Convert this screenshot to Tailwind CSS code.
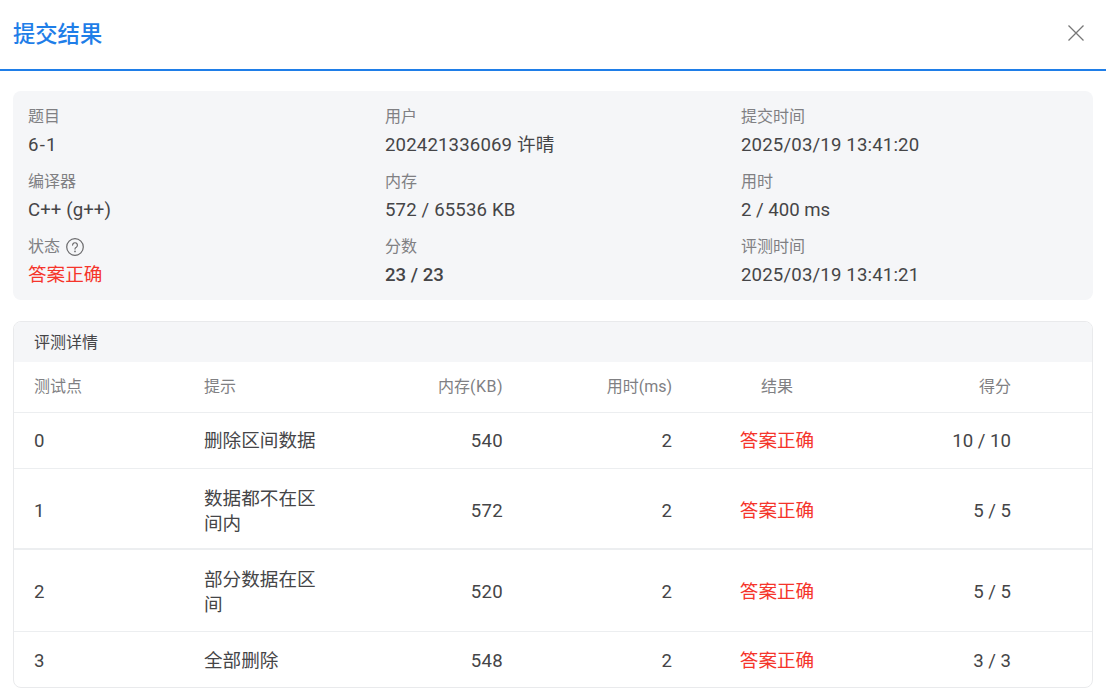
<!DOCTYPE html>
<html lang="zh-CN"><head><meta charset="utf-8">
<script src="https://cdn.jsdelivr.net/npm/@tailwindcss/browser@4"></script>
</head>
<body class="bg-white font-['Roboto','Noto_Sans_CJK_SC',sans-serif] text-[#454547] overflow-hidden">
<div class="w-[1106px] h-[696px] flex flex-col">
  <header class="h-[71px] shrink-0 border-b-2 border-[#1f7ee8] flex items-center justify-between pl-[13px] pr-[21px] pb-[2px]">
    <h1 class="text-[22.3px] leading-[28px] text-[#1f7ee8] font-medium">提交结果</h1>
    <svg class="w-[18px] h-[18px] mb-[2px] text-[#777]" viewBox="0 0 18 18" fill="none" stroke="currentColor" stroke-width="1.3"><path d="M1.5 1.5l15 15M16.5 1.5l-15 15"/></svg>
  </header>
  <main class="px-[13px] pt-5 flex flex-col gap-[21px]">
    <section class="h-[209px] rounded-lg bg-[#f5f6f8] pl-[15px] pt-[14px] grid grid-cols-[357px_356px_1fr] auto-rows-[65px]">
      <div><div class="text-base leading-6 text-[#808083]">题目</div><div class="text-[18.6px] leading-8 tracking-[1.2px]">6-1</div></div>
      <div><div class="text-base leading-6 text-[#808083]">用户</div><div class="text-[18.6px] leading-8 tracking-[0.15px]">202421336069 许晴</div></div>
      <div><div class="text-base leading-6 text-[#808083]">提交时间</div><div class="text-[18.6px] leading-8 tracking-[0.16px]">2025/03/19 13:41:20</div></div>
      <div><div class="text-base leading-6 text-[#808083]">编译器</div><div class="text-[18.6px] leading-8 tracking-[0.1px]">C++ (g++)</div></div>
      <div><div class="text-base leading-6 text-[#808083]">内存</div><div class="text-[18.6px] leading-8 tracking-[0.15px]">572 / 65536 KB</div></div>
      <div><div class="text-base leading-6 text-[#808083]">用时</div><div class="text-[18.6px] leading-8">2 / 400 ms</div></div>
      <div><div class="text-base leading-6 text-[#808083] flex items-center gap-[6px]">状态
        <svg class="w-[18px] h-[18px] text-[#6a6a6c]" viewBox="0 0 18 18" fill="none" stroke="currentColor" stroke-width="1.2"><circle cx="9" cy="9" r="8.3"/><path d="M6.6 7.1a2.4 2.4 0 1 1 3.7 2.1c-.9.5-1.3 1-1.3 1.9" stroke-linecap="round"/><circle cx="9" cy="13.4" r=".85" fill="currentColor" stroke="none"/></svg></div>
        <div class="text-[18.6px] leading-8 text-[#f5352b]">答案正确</div></div>
      <div><div class="text-base leading-6 text-[#808083]">分数</div><div class="text-[18.6px] leading-8 font-medium">23 / 23</div></div>
      <div><div class="text-base leading-6 text-[#808083]">评测时间</div><div class="text-[18.6px] leading-8 tracking-[0.16px]">2025/03/19 13:41:21</div></div>
    </section>
    <section class="h-[367px] rounded-lg border border-[#e9eaec] overflow-hidden flex flex-col">
      <div class="h-[40px] shrink-0 bg-[#f5f6f8] px-5 pt-[2px] flex items-center text-base">评测详情</div>
      <div class="h-[51px] shrink-0 grid grid-cols-[170px_170px_169px_169px_170px_169px_1fr] items-center border-b border-[#eceef0] text-base text-[#808083]">
        <div class="pl-5">测试点</div><div class="pl-5">提示</div><div class="pr-5 text-right">内存<span class="tracking-[0.5px]">(KB)</span></div><div class="pr-5 text-right">用时(ms)</div><div class="text-center">结果</div><div class="pr-5 text-right">得分</div>
      </div>
      <div class="h-[56px] shrink-0 pt-[2px] grid grid-cols-[170px_170px_169px_169px_170px_169px_1fr] items-center border-b border-[#eceef0] text-[18.6px] leading-[25px]">
        <div class="pl-5">0</div><div class="px-5">删除区间数据</div><div class="pr-5 text-right tracking-[0.3px]">540</div><div class="pr-5 text-right">2</div><div class="text-center text-[#f5352b]">答案正确</div><div class="pr-5 text-right">10 / 10</div>
      </div>
      <div class="h-[81px] shrink-0 pt-[6px] grid grid-cols-[170px_170px_169px_169px_170px_169px_1fr] items-center border-b-2 border-[#eceef0] text-[18.6px] leading-[25px]">
        <div class="pl-5">1</div><div class="px-5">数据都不在区间内</div><div class="pr-5 text-right tracking-[0.3px]">572</div><div class="pr-5 text-right">2</div><div class="text-center text-[#f5352b]">答案正确</div><div class="pr-5 text-right">5 / 5</div>
      </div>
      <div class="h-[82px] shrink-0 pt-1 grid grid-cols-[170px_170px_169px_169px_170px_169px_1fr] items-center border-b border-[#eceef0] text-[18.6px] leading-[25px]">
        <div class="pl-5">2</div><div class="px-5">部分数据在区间</div><div class="pr-5 text-right tracking-[0.3px]">520</div><div class="pr-5 text-right">2</div><div class="text-center text-[#f5352b]">答案正确</div><div class="pr-5 text-right">5 / 5</div>
      </div>
      <div class="h-[55px] shrink-0 pt-1 grid grid-cols-[170px_170px_169px_169px_170px_169px_1fr] items-center text-[18.6px] leading-[25px]">
        <div class="pl-5">3</div><div class="px-5">全部删除</div><div class="pr-5 text-right tracking-[0.3px]">548</div><div class="pr-5 text-right">2</div><div class="text-center text-[#f5352b]">答案正确</div><div class="pr-5 text-right">3 / 3</div>
      </div>
    </section>
  </main>
</div>
</body></html>
